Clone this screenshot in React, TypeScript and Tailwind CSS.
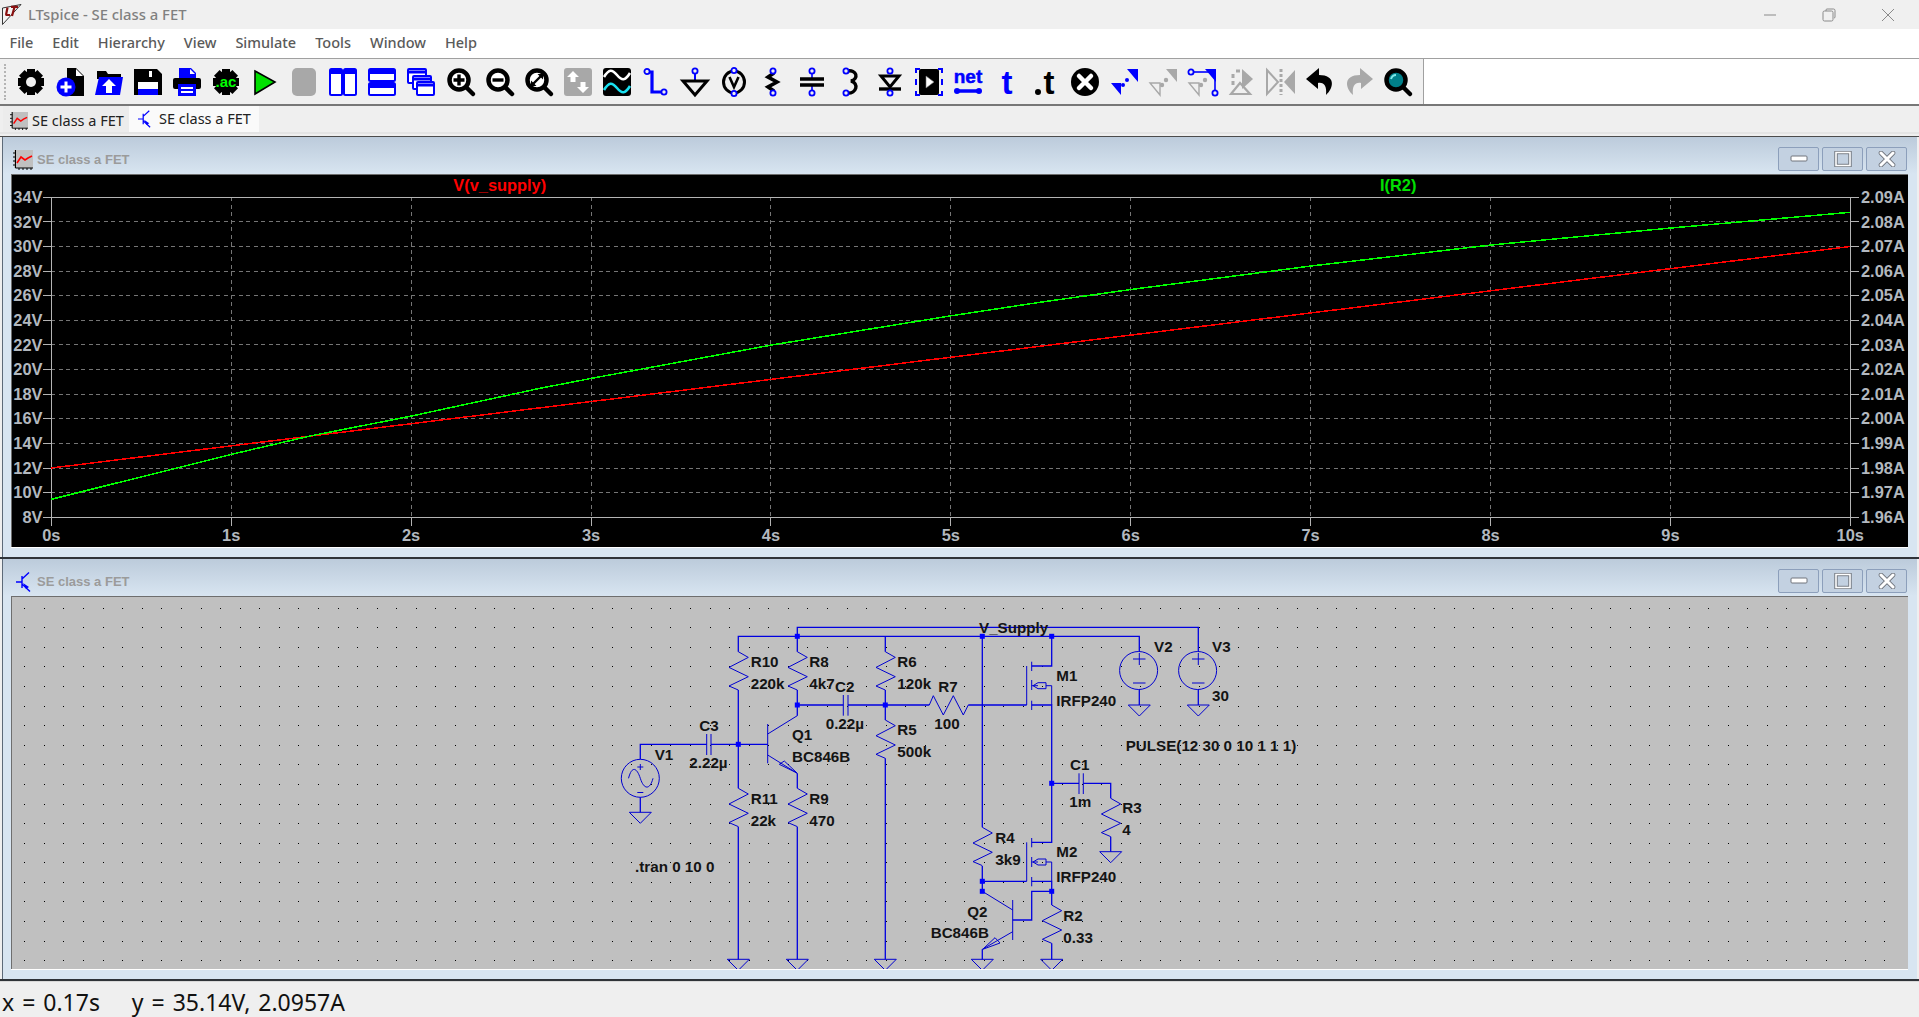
import type { ReactNode } from "react";

const BLUE = "#0000ff";
const GRAY = "#a8a8a8";

const menus = ["File", "Edit", "Hierarchy", "View", "Simulate", "Tools", "Window", "Help"];

function Pin({ x, y }: { x: number; y: number }) {
  return <circle cx={x} cy={y} r={2.6} fill="#efefef" stroke={BLUE} strokeWidth={1.8} />;
}

function Gear({ children }: { children?: ReactNode }) {
  return (
    <>
      {[0, 45, 90, 135].map((a) => (
        <rect key={a} x={10} y={1} width={8} height={26} fill="#000" transform={`rotate(${a} 14 14)`} />
      ))}
      <circle cx={14} cy={14} r={11} fill="#000" />
      {children}
    </>
  );
}

function Lens({ children, fill = "#fff" }: { children?: ReactNode; fill?: string }) {
  return (
    <>
      <path d="M18 18 L26 26" stroke="#000" strokeWidth={4.5} strokeLinecap="round" />
      <circle cx={12} cy={12} r={9.5} fill={fill} stroke="#000" strokeWidth={4.5} />
      {children}
    </>
  );
}

// toolbar drawings, all on a 28x28 box
const toolIcons: ReactNode[] = [
  <Gear><circle cx={14} cy={14} r={5} fill="#efefef" /></Gear>,
  <>
    <path d="M11 0 H20 L28 8 V28 H11 Z" fill="#000" />
    <path d="M20 1 L27 8 H20 Z" fill="#fff" />
    <circle cx={10} cy={19} r={9.5} fill={BLUE} />
    <path d="M10 13.5 V24.5 M4.5 19 H15.5" stroke="#fff" strokeWidth={3} />
  </>,
  <>
    <path d="M2 3 H11 L13 6 H26 V11 H2 Z" fill="#000" />
    <path d="M4 9 H28 L25 27 H0 Z" fill={BLUE} />
    <path d="M14 11 L21 18 H17 V25 H11 V18 H7 Z" fill="#fff" />
  </>,
  <>
    <path d="M0 1 H23 L28 6 V27 H0 Z" fill="#000" />
    <rect x={7} y={2} width={13} height={9} fill="#000" />
    <rect x={15} y={3} width={3} height={6} fill="#fff" />
    <rect x={4} y={14} width={20} height={13} fill="#fff" />
    <rect x={4} y={21} width={20} height={6} fill={BLUE} />
  </>,
  <>
    <path d="M6 0 H18 L23 5 V12 H6 Z" fill={BLUE} />
    <path d="M17 1 L22 6 H17 Z" fill="#fff" />
    <rect x={0} y={10} width={28} height={11} rx={2} fill="#000" />
    <rect x={5} y={16} width={18} height={12} fill={BLUE} />
    <path d="M8 20 H20 M8 24 H20" stroke="#fff" strokeWidth={2} />
  </>,
  <Gear>
    <text x={14} y={19} textAnchor="middle" fontFamily="Liberation Sans" fontWeight={700} fontSize={15} fill="#00ff00">.ac</text>
  </Gear>,
  <path d="M4 3 L24 14 L4 26 Z" fill="#00e000" stroke="#000" strokeWidth={1.6} />,
  <rect x={2} y={0} width={24} height={28} rx={5} fill={GRAY} />,
  <>
    <rect x={1} y={1} width={12} height={26} rx={1.5} fill="#fff" stroke={BLUE} strokeWidth={2} />
    <rect x={15} y={1} width={12} height={26} rx={1.5} fill="#fff" stroke={BLUE} strokeWidth={2} />
    <path d="M1 4 H13 M15 4 H27" stroke={BLUE} strokeWidth={4} />
  </>,
  <>
    <rect x={1} y={1} width={26} height={12} rx={1.5} fill="#fff" stroke={BLUE} strokeWidth={2} />
    <rect x={1} y={15} width={26} height={12} rx={1.5} fill="#fff" stroke={BLUE} strokeWidth={2} />
    <path d="M1 4 H27 M1 18 H27" stroke={BLUE} strokeWidth={4} />
  </>,
  <>
    <rect x={1} y={1} width={18} height={14} rx={1} fill="#fff" stroke={BLUE} strokeWidth={2} />
    <rect x={6} y={8} width={18} height={13} rx={1} fill="#fff" stroke={BLUE} strokeWidth={2} />
    <rect x={10} y={14} width={17} height={13} rx={1} fill="#fff" stroke={BLUE} strokeWidth={2} />
    <path d="M1 4 H19 M6 11 H24 M10 17 H27" stroke={BLUE} strokeWidth={3} />
  </>,
  <Lens><path d="M12 6.5 V17.5 M6.5 12 H17.5" stroke="#000" strokeWidth={3.4} /></Lens>,
  <Lens><path d="M6.5 12 H17.5" stroke="#000" strokeWidth={3.4} /></Lens>,
  <Lens>
    <path d="M7.5 16.5 L16.5 7.5" stroke="#000" strokeWidth={2.4} />
    <path d="M12.5 6 H18 V11.5 Z M6 12.5 V18 H11.5 Z" fill="#000" />
  </Lens>,
  <>
    <rect x={0} y={0} width={28} height={28} rx={3} fill={GRAY} />
    <path d="M9 3 L15 9 H11.5 V14 H6.5 V9 H3 Z M19 25 L13 19 H16.5 V14 H21.5 V19 H25 Z" fill="#fff" />
  </>,
  <>
    <rect x={0} y={0} width={28} height={28} rx={3} fill="#000" />
    <path d="M1 9 C6 1 9 1 14 7 C19 13 22 13 27 5" fill="none" stroke="#fff" strokeWidth={2.6} />
    <path d="M1 22 C6 14 9 14 14 20 C19 26 22 26 27 18" fill="none" stroke="#19e0f0" strokeWidth={2.6} />
  </>,
  <>
    <path d="M5 4 H10 V24 H20" fill="none" stroke={BLUE} strokeWidth={3.2} />
    <Pin x={5} y={3.5} />
    <Pin x={22} y={24} />
  </>,
  <>
    <path d="M14 4 V13" stroke={BLUE} strokeWidth={2} />
    <path d="M2 13 H26 L14 27 Z" fill="#efefef" stroke="#000" strokeWidth={3} />
    <Pin x={14} y={3} />
  </>,
  <>
    <path d="M14 2 V26" stroke={BLUE} strokeWidth={1.6} />
    <ellipse cx={14} cy={14} rx={10.5} ry={11} fill="#efefef" stroke="#000" strokeWidth={3} />
    <path d="M9.5 9 L14 19 L18.5 9" fill="none" stroke="#000" strokeWidth={2.6} />
    <Pin x={14} y={2.5} />
    <Pin x={14} y={25.5} />
  </>,
  <>
    <path d="M15 5 L9 9 L18 14 L9 19 L15 23" fill="none" stroke="#000" strokeWidth={3.6} />
    <Pin x={14} y={3} />
    <Pin x={14} y={25} />
  </>,
  <>
    <path d="M14 5 V11 M14 17 V23" stroke={BLUE} strokeWidth={1.6} />
    <path d="M2 11 H26 M2 17 H26" stroke="#000" strokeWidth={3.4} />
    <Pin x={14} y={3} />
    <Pin x={14} y={25} />
  </>,
  <>
    <path d="M10 3 C20 1 22 11 14 13 C22 15 20 26 10 25" fill="none" stroke="#000" strokeWidth={3.4} />
    <Pin x={9} y={3} />
    <Pin x={9} y={25} />
  </>,
  <>
    <path d="M5 8 H23 L14 19 Z" fill="#efefef" stroke="#000" strokeWidth={3} />
    <path d="M3 21 H25" stroke="#000" strokeWidth={3.4} />
    <Pin x={14} y={3} />
    <Pin x={14} y={25} />
  </>,
  <>
    <rect x={4} y={1} width={20} height={26} rx={2} fill="#000" />
    <path d="M11 8 L19 14 L11 20 Z" fill="#fff" stroke="#777" strokeWidth={0.6} />
    <path d="M1 5 V1 H5 M23 1 H27 V5 M1 11 V17 M27 11 V17 M1 23 V27 H5 M23 27 H27 V23" fill="none" stroke={BLUE} strokeWidth={2} />
  </>,
  <>
    <text x={14} y={15} textAnchor="middle" fontFamily="Liberation Sans" fontWeight={700} fontSize={19} fill={BLUE} stroke={BLUE} strokeWidth={0.5}>net</text>
    <path d="M3 23 H25" stroke={BLUE} strokeWidth={3.5} strokeLinecap="round" />
    <circle cx={3} cy={23} r={3} fill={BLUE} />
    <circle cx={25} cy={23} r={3} fill={BLUE} />
  </>,
  <text x={14} y={26} textAnchor="middle" fontFamily="Liberation Sans" fontWeight={700} fontSize={33} fill={BLUE}>t</text>,
  <>
    <text x={17} y={26} textAnchor="middle" fontFamily="Liberation Sans" fontWeight={700} fontSize={33} fill="#000">t</text>
    <circle cx={6} cy={24} r={3} fill="#000" />
  </>,
  <>
    <circle cx={14} cy={14} r={14} fill="#000" />
    <path d="M8 8 L20 20 M20 8 L8 20" stroke="#fff" strokeWidth={4.5} strokeLinecap="round" />
  </>,
  <>
    <path d="M17 1 H28 V14 Z M1 15 H11 V27 Z" fill={BLUE} />
    <circle cx={13} cy={17} r={2} fill={BLUE} />
    <circle cx={17} cy={12} r={2} fill={BLUE} />
  </>,
  <>
    <path d="M17 1 H28 V14 Z" fill={GRAY} />
    <path d="M1 15 H11 V27 Z" fill="none" stroke={GRAY} strokeWidth={1.4} />
    <circle cx={13} cy={17} r={2.2} fill={GRAY} />
    <circle cx={17} cy={12} r={2.2} fill={GRAY} />
  </>,
  <>
    <path d="M4 4 H27" stroke={BLUE} strokeWidth={1.6} />
    <path d="M27 1 V23" stroke={BLUE} strokeWidth={1.6} />
    <path d="M17 1 H28 V14 Z" fill={BLUE} />
    <path d="M1 15 H11 V27 Z" fill="none" stroke={GRAY} strokeWidth={1.4} />
    <circle cx={13} cy={17} r={2.2} fill={GRAY} />
    <circle cx={17} cy={12} r={2.2} fill={GRAY} />
    <Pin x={3} y={4} />
    <Pin x={27} y={25} />
  </>,
  <>
    <path d="M15 1 L26 11 L15 21 Z" fill={GRAY} />
    <path d="M13 3 H9 M6 6 V10 M6 13 V17" stroke={GRAY} strokeWidth={3} />
    <path d="M13 15 L4 26 H23 Z" fill="none" stroke={GRAY} strokeWidth={2.2} />
  </>,
  <>
    <path d="M0 2 L11 14 L0 26 Z" fill="none" stroke={GRAY} strokeWidth={2} />
    <path d="M28 2 L17 14 L28 26 Z" fill={GRAY} />
    <path d="M14 1 V27" stroke={GRAY} strokeWidth={3} strokeDasharray="3 2" />
  </>,
  <path d="M13 0 L0 11 L12 21 V15 C18 14 21 18 20 27 C28 20 30 7 13 7 Z" fill="#000" />,
  <path d="M15 0 L28 11 L16 21 V15 C10 14 7 18 8 27 C0 20 -2 7 15 7 Z" fill={GRAY} />,
  <>
    <path d="M18 18 L26 26" stroke="#000" strokeWidth={4.5} strokeLinecap="round" />
    <circle cx={12} cy={12} r={9.5} fill="#00808a" stroke="#000" strokeWidth={4.5} />
    <path d="M7 11 C8 8 10 7 12 7" fill="none" stroke="#7fe8e8" strokeWidth={2} />
  </>,
];

function PlotIcon({ small }: { small?: boolean }) {
  return (
    <svg viewBox="0 0 20 20" className={small ? "w-[18px] h-[18px] shrink-0" : "w-5 h-5 shrink-0"}>
      <rect x={1} y={0} width={19} height={18} fill="#c0c0c0" />
      <path d="M2.5 0 V18 H20 M0 3 H2.5 M0 7 H2.5 M0 11 H2.5 M0 15 H2.5 M6 18 V20 M10 18 V20 M14 18 V20 M18 18 V20" stroke="#000" strokeWidth={1} fill="none" />
      <path d="M4 13 L8 7 L12 10 L15 8 L19 6" stroke="#ff0000" strokeWidth={1.6} fill="none" />
    </svg>
  );
}

function TransistorIcon({ small }: { small?: boolean }) {
  return (
    <svg viewBox="0 0 15 20" className={small ? "w-[13px] h-[18px] shrink-0" : "w-[15px] h-5 shrink-0"}>
      <path d="M0 10 H6 M6 4 V16 M6 7 L13 0.5 M6 12 L14 19.5" stroke="#0000ff" strokeWidth={1.4} fill="none" />
      <path d="M7 11 L13 15 L10 17 Z" fill="#0000ff" />
    </svg>
  );
}

function WinButton({ children }: { children: ReactNode }) {
  return (
    <div className="w-[41px] h-6 flex items-center justify-center border border-[#8c9fbb] rounded-[2px] bg-[#c3d1e1]">
      <svg viewBox="0 0 18 16" className="w-[18px] h-4">{children}</svg>
    </div>
  );
}

function MdiWindow({ icon, children }: { icon: ReactNode; children: ReactNode }) {
  return (
    <div className="w-[1915px] h-[420px] ml-[2px] flex flex-col shrink-0 border-l border-l-[#5d6a78] bg-[#d8e5f1] rounded-tr-[4px]">
      <div className="h-[37px] flex items-start pl-[10px] pr-[10px] bg-gradient-to-b from-[#bccbdb] to-[#d8e5f1]">
        <div className="flex items-center gap-1 mt-[13px]">
          <div className="w-5 h-5 flex justify-center shrink-0">{icon}</div>
          <span className="text-[13px] font-bold text-[#9b9b9b] font-['Liberation_Sans',sans-serif]">SE class a FET</span>
        </div>
        <div className="ml-auto mt-[10px] flex gap-[3px]">
          <WinButton>
            <rect x={1} y={5} width={16} height={5} rx={1} fill="#fff" stroke="#70757d" />
          </WinButton>
          <WinButton>
            <rect x={2} y={1.5} width={14} height={13} fill="none" stroke="#70757d" strokeWidth={3.4} />
            <rect x={2} y={1.5} width={14} height={13} fill="none" stroke="#fff" strokeWidth={1.6} />
          </WinButton>
          <WinButton>
            <path d="M3 2 L15 14 M15 2 L3 14" stroke="#70757d" strokeWidth={4.6} strokeLinecap="round" />
            <path d="M3 2 L15 14 M15 2 L3 14" stroke="#fff" strokeWidth={3} strokeLinecap="round" />
          </WinButton>
        </div>
      </div>
      <div className="ml-[8px] mr-[9px] h-[373px] border-t border-l border-t-[#6e6e6e] border-l-[#6e6e6e] overflow-hidden">{children}</div>
      <div className="flex-1 border-t border-t-white ml-[8px] mr-[9px]" />
    </div>
  );
}

const X0 = 51.3;
const XS = 179.9;
const YT = 197.3;
const YB = 517.3;
const DY = (YB - YT) / 13;

const greenPts: [number, number][] = [
  [51.3, 499.3], [231.7, 454.3], [310, 436], [411.7, 416], [540, 388.3], [591.7, 378.3], [771.7, 345],
  [951.7, 315.7], [1040, 302.3], [1131, 289.5], [1311, 266], [1491, 245], [1671, 228], [1850.3, 212.3],
];

function PlotPane() {
  const txt = { fontFamily: "Liberation Sans", fontWeight: 700, fontSize: 16.4 };
  const leftAxis = Array.from({ length: 14 }, (_, i) => `${34 - i * 2}V`);
  const rightAxis = Array.from({ length: 14 }, (_, i) => `${(2.09 - i * 0.01).toFixed(2)}A`);
  return (
    <svg viewBox="12 175 1896 372" className="block w-[1896px] h-[372px] bg-black">
      <g stroke="#757575" strokeWidth={1} strokeDasharray="4 3.5" shapeRendering="crispEdges">
        {Array.from({ length: 12 }, (_, i) => (
          <line key={i} x1={X0} x2={X0 + XS * 10} y1={YT + DY * (i + 1)} y2={YT + DY * (i + 1)} />
        ))}
        {Array.from({ length: 9 }, (_, i) => (
          <line key={i} x1={X0 + XS * (i + 1)} x2={X0 + XS * (i + 1)} y1={YT} y2={YB} />
        ))}
      </g>
      <g stroke="#b4b4b4" strokeWidth={1} shapeRendering="crispEdges">
        <rect x={X0} y={YT} width={XS * 10} height={YB - YT} fill="none" />
        {leftAxis.map((_, i) => (
          <g key={i}>
            <line x1={43} x2={X0} y1={YT + DY * i} y2={YT + DY * i} />
            <line x1={X0 + XS * 10} x2={1859} y1={YT + DY * i} y2={YT + DY * i} />
          </g>
        ))}
        {Array.from({ length: 11 }, (_, i) => (
          <line key={i} x1={X0 + XS * i} x2={X0 + XS * i} y1={YB} y2={526} />
        ))}
      </g>
      <line x1={51.3} y1={468} x2={1850.3} y2={246.5} stroke="#ff0000" strokeWidth={1.5} shapeRendering="crispEdges" />
      <polyline points={greenPts.map((p) => p.join(",")).join(" ")} fill="none" stroke="#00ff00" strokeWidth={1.5} shapeRendering="crispEdges" />
      <g {...txt} fill="#b2b8bf">
        {leftAxis.map((t, i) => (
          <text key={t} x={42.5} y={YT + DY * i + 5.6} textAnchor="end">{t}</text>
        ))}
        {rightAxis.map((t, i) => (
          <text key={t} x={1861} y={YT + DY * i + 5.6}>{t}</text>
        ))}
        {Array.from({ length: 11 }, (_, i) => (
          <text key={i} x={X0 + XS * i} y={540.7} textAnchor="middle">{`${i}s`}</text>
        ))}
      </g>
      <text {...txt} x={453.3} y={190.7} fill="#ff0000">V(v_supply)</text>
      <text {...txt} x={1380} y={190.7} fill="#00e000">I(R2)</text>
    </svg>
  );
}

// zigzag bodies, x/y is the top (or left) lead
const zigV = (x: number, y: number) =>
  `M${x} ${y} l10 5.7 l-19.3 10 l19.3 9.3 l-19.3 9.3 l9.3 4`;
const zigH = (x: number, y: number) =>
  `M${x} ${y} l4 -9.3 l10 19.3 l10 -19.3 l10 19.3 l5 -10`;
const gnd = (x: number, y: number) => `M${x - 11} ${y} H${x + 11} L${x} ${y + 11} Z`;

const wires = [
  "M797.3 636.3 V627.3 H1198.3 V651.7",
  "M738.3 651.7 V636.3 H1139.3 V651.7",
  "M797.3 636.3 V651.7",
  "M738.3 690 V788.3 M738.3 826.7 V959.3",
  "M797.3 690 V715.7",
  "M797.3 773.3 V788.3 M797.3 826.7 V959.3",
  "M797.3 705 H843.3 M848 705 H929.3",
  "M968.3 705 H1026.7",
  "M885.3 636.3 V651.7 M885.3 690 V720 M885.3 758.3 V959.3",
  "M738.3 744.3 H767.7",
  "M640.3 759.3 V744.3 H706.7 M711 744.3 H738.3",
  "M640.3 797.3 V812.3",
  "M982.3 636.3 V827.3 M982.3 866 V891.3",
  "M982.3 881.3 H1026.7",
  "M1051.7 636.3 V666 H1031.7",
  "M1031.7 705 H1051.7 V842.3 H1031.7",
  "M1031.7 881.3 H1051.7 V905 M1051.7 943.3 V959.3",
  "M1051.7 891.3 H1031.7 V920 H1012.7",
  "M1051.7 783.3 H1079 M1083.3 783.3 H1110.7 V798.3 M1110.7 836.7 V851.7",
  "M982.3 949.3 V959.3",
  "M1139.3 689.3 V705 M1198.3 689.3 V705",
];

const symbols = [
  zigV(738.3, 651.7), zigV(797.3, 651.7), zigV(885.3, 651.7), zigV(885.3, 720), zigV(738.3, 788.3), zigV(797.3, 788.3),
  zigV(982.3, 827.3), zigV(1051.7, 905), zigV(1110.7, 798.3), zigH(929.3, 705),
  gnd(640.3, 812.3), gnd(738.3, 959.3), gnd(797.3, 959.3), gnd(885.3, 959.3), gnd(982.3, 959.3), gnd(1051.7, 959.3),
  gnd(1110.7, 851.7), gnd(1139.3, 705), gnd(1198.3, 705),
  "M843.3 695 V715.7 M848 695 V715.7",
  "M706.7 734 V755 M711 734 V755",
  "M1079 773.3 V794 M1083.3 773.3 V794",
  // Q1
  "M767.7 724 V763.3 M797.3 715.7 L767.7 734 M767.7 755 L797.3 773.3",
  "M779.3 764.3 L784.3 761 L797 773 Z",
  // Q2
  "M1012.7 900 V940 M982.3 891.3 L1012.7 910 M1012.7 931.7 L982.3 949.3",
  "M982.7 949.3 L995 937.7 L1000 943 Z",
  // M1
  "M1026.7 666 V705 M1031.7 661.7 V671 M1031.7 680 V690 M1031.7 700.7 V710 M1031.7 685.7 H1038 M1046 685.7 H1051.7 V705",
  "M1033 685.7 L1038 682.7 H1046 V688.7 H1038 Z",
  // M2
  "M1026.7 842.3 V881.3 M1031.7 838 V847.3 M1031.7 857 V867 M1031.7 877 V886.3 M1031.7 862 H1038 M1046 862 H1051.7 V881.3",
  "M1033 862 L1038 859 H1046 V865 H1038 Z",
  // source signs
  "M628.5 778.3 C632 765 637 768 640.3 778.3 C644 790 650 790 653 778.3",
  "M640.3 764 V770 M637.3 767 H643.3 M637.3 792.5 H643.3",
  "M1139.3 653 V665 M1133 659 H1145.5 M1133 683 H1145.5",
  "M1198.3 653 V665 M1192 659 H1204.5 M1192 683 H1204.5",
];

const junctions: [number, number][] = [
  [797.3, 636.3], [738.3, 744.3], [797.3, 705], [885.3, 705], [982.3, 636.3], [1051.7, 636.3],
  [1051.7, 783.3], [982.3, 881.3], [982.3, 891.3], [1051.7, 891.3],
];

const labels: [string, number, number][] = [
  ["R10", 750.7, 667.3], ["220k", 750.7, 689.3], ["R8", 809.3, 667.3], ["4k7", 809.3, 689.3],
  ["C2", 835, 692.3], ["0.22µ", 825.7, 729], ["C3", 699.3, 731], ["2.22µ", 689.3, 768.3],
  ["V1", 654.7, 760], ["Q1", 792, 740], ["BC846B", 792, 762], ["R6", 897.3, 667.3], ["120k", 897.3, 689.3],
  ["R5", 897.3, 735.3], ["500k", 897.3, 757], ["R11", 750.7, 804.3], ["22k", 750.7, 826], ["R9", 809.3, 804.3],
  ["470", 809.3, 826], [".tran 0 10 0", 635, 872.3], ["V_Supply", 979, 633.3], ["R7", 938.3, 692.3],
  ["100", 934.3, 729], ["M1", 1056.3, 681.3], ["IRFP240", 1056.3, 706.3], ["V2", 1154, 651.7], ["V3", 1212, 651.7],
  ["30", 1212, 701.3], ["PULSE(12 30 0 10 1 1 1)", 1125.7, 751], ["C1", 1070, 770], ["1m", 1069.3, 807],
  ["R3", 1122.3, 813.3], ["4", 1122.3, 835], ["R4", 995.3, 843.3], ["3k9", 995.3, 865], ["M2", 1056.3, 857.3],
  ["IRFP240", 1056.3, 882.3], ["Q2", 967.3, 916.7], ["BC846B", 930.7, 938.3], ["R2", 1063.3, 921.3], ["0.33", 1063.3, 942.7],
];

function SchematicPane() {
  const dots: [number, number][] = [];
  for (let i = 0; i < 96; i++) {
    for (let k = -1; k <= 17; k++) {
      dots.push([Math.round(24.3 + i * 19.58), Math.round(627.3 + k * 19.58)]);
    }
  }
  return (
    <svg viewBox="12 597 1896 372" className="block w-[1896px] h-[372px] bg-[#c0c0c0]">
      {dots.map(([x, y]) => (
        <rect key={`${x}-${y}`} x={x} y={y} width={1} height={1} fill="#000" />
      ))}
      <path d={wires.join(" ")} fill="none" stroke="#0000e0" strokeWidth={1.3} />
      <path d={symbols.join(" ")} fill="none" stroke="#0000d0" strokeWidth={1} />
      {[[640.3, 778.3], [1138.6, 670.5], [1197.6, 670.5]].map(([cx, cy]) => (
        <circle key={cx} cx={cx} cy={cy} r={19} fill="none" stroke="#0000d0" strokeWidth={1} />
      ))}
      {junctions.map(([x, y]) => (
        <rect key={`${x}-${y}`} x={x - 2.5} y={y - 2.5} width={5} height={5} fill="#0000ff" />
      ))}
      <g fontFamily="Liberation Sans" fontWeight={700} fontSize={15.2} fill="#141414">
        {labels.map(([t, x, y]) => (
          <text key={`${t}-${x}-${y}`} x={x} y={y}>{t}</text>
        ))}
      </g>
    </svg>
  );
}

export default function App() {
  return (
    <div className="w-[1919px] h-[1017px] overflow-hidden flex flex-col bg-[#efefef] font-['Noto_Sans',sans-serif]">
      {/* Title bar */}
      <div className="h-[29px] flex items-center bg-[#f0f0f0] shrink-0">
        <svg viewBox="0 0 20 21" className="w-5 h-[21px] ml-[2px] mt-[-1px]">
          <path d="M0.5 4 L19 0.5 L0.5 20.5 Z" fill="#f4f4f4" stroke="#222" strokeWidth={0.9} />
          <path d="M4 11 L5.5 3.5 M3.5 11 H8 M9 2.8 H16 M12.5 3 L10 12" stroke="#8a1010" strokeWidth={2.2} fill="none" />
        </svg>
        <span className="ml-[6px] text-[14.8px] font-medium text-[#808080]">LTspice - SE class a FET</span>
        <div className="ml-auto flex items-center gap-[45px] mr-[24px]">
          <svg viewBox="0 0 14 14" className="w-[14px] h-[14px]"><path d="M1 7 H13" stroke="#8a8a8a" /></svg>
          <svg viewBox="0 0 14 14" className="w-[14px] h-[14px]">
            <rect x={1} y={3} width={10} height={10} rx={1.5} fill="none" stroke="#8a8a8a" />
            <path d="M4 3 V2 Q4 1 5 1 H11.5 Q13 1 13 2.5 V9 Q13 10 12 10" fill="none" stroke="#8a8a8a" />
          </svg>
          <svg viewBox="0 0 14 14" className="w-[14px] h-[14px]"><path d="M1 1 L13 13 M13 1 L1 13" stroke="#8a8a8a" /></svg>
        </div>
      </div>

      {/* Menu */}
      <div className="h-[30px] flex items-center bg-white border-b border-b-[#a0a0a0] pb-px shrink-0">
        <div className="flex">
          {menus.map((m) => (
            <span key={m} className="px-[9.5px] text-[14.5px] font-medium text-[#5a5a5a]">{m}</span>
          ))}
        </div>
      </div>

      {/* Toolbar */}
      <div className="h-[47px] flex bg-white border-b-2 border-b-[#777777] shrink-0">
        <div className="w-[1424px] flex items-center bg-[#f0f0f0] border-r border-r-[#a0a0a0]">
          <div className="w-[3px] h-[36px] ml-[4px] mr-[4.5px] border-l-2 border-dotted border-l-[#b4b4b4]" />
          {toolIcons.map((icon, i) => (
            <div key={i} className="w-[39.05px] h-7 shrink-0 flex justify-center">
              <svg viewBox="0 0 28 28" className="w-7 h-7 overflow-visible">{icon}</svg>
            </div>
          ))}
        </div>
      </div>

      {/* Document tabs */}
      <div className="h-[31px] shrink-0 flex flex-col border-b border-b-[#4c4c4c]">
        <div className="flex h-[26px] pl-[3px]">
          <div className="w-[126px] flex items-center gap-[4px] pl-[7px] pt-[3px] text-[14.5px] text-[#222] bg-[#ececec]">
            <PlotIcon small />
            <span>SE class a FET</span>
          </div>
          <div className="w-[130px] flex items-center gap-[8px] pl-[9px] text-[14.5px] text-[#222] bg-[#fafafa]">
            <TransistorIcon small />
            <span>SE class a FET</span>
          </div>
        </div>
        <div className="h-[2px] bg-[#e4e4e4]" />
      </div>

      {/* MDI area */}
      <MdiWindow icon={<PlotIcon />}><PlotPane /></MdiWindow>
      <div className="h-[2px] bg-[#2f3338] shrink-0" />
      <MdiWindow icon={<TransistorIcon />}><SchematicPane /></MdiWindow>
      <div className="h-[2px] bg-[#2f3338] shrink-0" />

      {/* Status bar */}
      <div className="flex-1 border-t border-t-[#d8d8d8] pl-[2px] pt-[3px] text-[23px] leading-[34px] [word-spacing:2px] text-[#111] whitespace-pre">
        x = 0.17s    y = 35.14V, 2.0957A
      </div>
    </div>
  );
}
